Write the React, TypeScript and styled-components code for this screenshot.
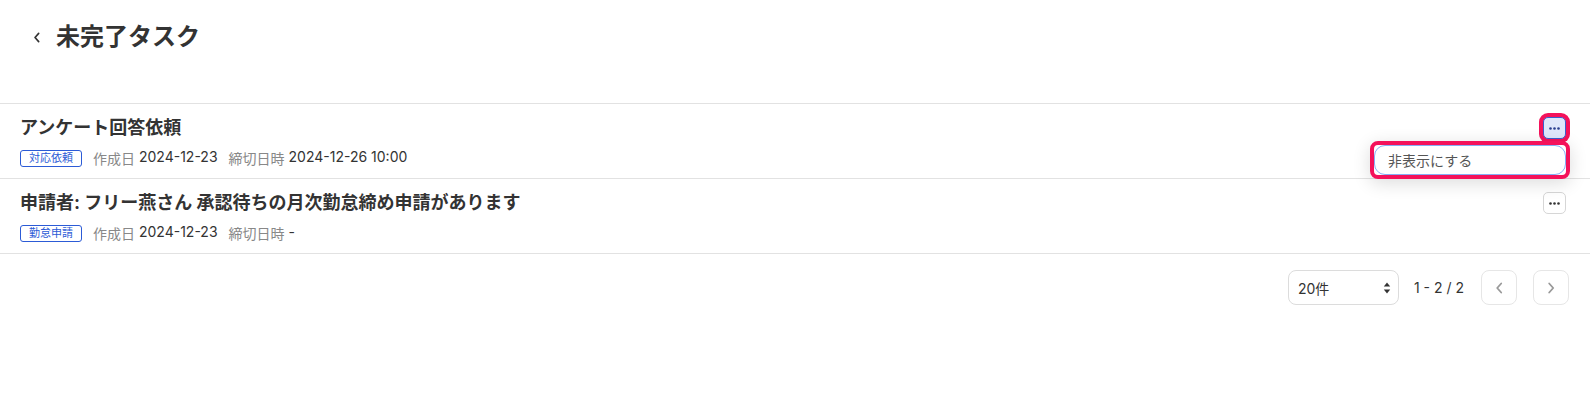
import React from 'react';
import styled, { createGlobalStyle } from 'styled-components';

const GlobalStyle = createGlobalStyle`
  html, body {
    margin: 0;
    padding: 0;
    background: #fff;
  }
  body {
    font-family: Inter, "Noto Sans CJK JP", sans-serif;
    color: #333;
  }
  * { box-sizing: border-box; }
`;

const HIGHLIGHT = '#f4125b';

const Page = styled.div`
  width: 1590px;
  height: 416px;
  background: #fff;
`;

const Header = styled.header`
  height: 103px;
  display: flex;
  align-items: flex-start;
  padding: 19px 20px 0 30px;
  gap: 12px;
`;

const BackButton = styled.button`
  width: 14px;
  height: 36px;
  padding: 0;
  border: none;
  background: none;
  display: flex;
  align-items: center;
  justify-content: center;
  color: #333;
`;

const PageTitle = styled.h1`
  margin: 0;
  font-size: 24px;
  line-height: 36px;
  font-weight: 700;
  color: #333;
`;

const List = styled.ul`
  list-style: none;
  margin: 0;
  padding: 0;
  border-top: 1px solid #e2e2e2;
`;

const Row = styled.li`
  display: flex;
  justify-content: space-between;
  align-items: flex-start;
  padding: 11px 24px 10px 20px;
  border-bottom: 1px solid #e2e2e2;
`;

const RowBody = styled.div`
  display: flex;
  flex-direction: column;
  gap: 7px;
`;

const RowTitle = styled.div`
  font-size: 18px;
  line-height: 26px;
  font-weight: 700;
  color: #333;
`;

const Meta = styled.div`
  display: flex;
  align-items: center;
  height: 20px;
  font-size: 14px;
  gap: 11px;
`;

const Tag = styled.span`
  display: inline-flex;
  align-items: center;
  height: 17px;
  padding: 0 8px;
  border: 1px solid #2c5bd6;
  border-radius: 3px;
  color: #2c5bd6;
  font-size: 11px;
  line-height: 1;
`;

const MetaItem = styled.span`
  display: inline-flex;
  gap: 4px;
  color: #333;
`;

const MetaLabel = styled.span`
  color: #888;
`;

const KebabWrap = styled.div`
  position: relative;
  margin-top: 2px;
`;

const Kebab = styled.button<{ $active?: boolean }>`
  width: 23px;
  height: 22px;
  padding: 0;
  display: flex;
  align-items: center;
  justify-content: center;
  border-radius: 5px;
  border: 1px solid ${p => (p.$active ? '#3b5fce' : '#d6d6d6')};
  background: ${p => (p.$active ? '#dfe7fb' : '#fff')};
  color: ${p => (p.$active ? '#2a3f8f' : '#333')};
  box-shadow: ${p => (p.$active ? `0 0 0 4px ${HIGHLIGHT}` : 'none')};
`;

const Menu = styled.div`
  position: absolute;
  top: calc(100% + 2px);
  right: -4px;
  width: 200px;
  border: 4px solid ${HIGHLIGHT};
  border-radius: 8px;
  background: #fff;
  box-shadow: 0 4px 18px rgba(0, 0, 0, 0.14);
  z-index: 2;
`;

const MenuItem = styled.div`
  height: 30px;
  display: flex;
  align-items: center;
  padding-left: 13px;
  border: 1.5px solid #86aef5;
  border-radius: 11px;
  font-size: 14px;
  color: #555;
`;

const Pager = styled.div`
  display: flex;
  justify-content: flex-end;
  align-items: center;
  padding: 16px 21px 0 0;
  gap: 16px;
`;

const PerPage = styled.div`
  width: 111px;
  height: 35px;
  display: flex;
  align-items: center;
  justify-content: space-between;
  padding: 0 7px 0 9px;
  border: 1px solid #dcdcdc;
  border-radius: 8px;
  font-size: 14px;
  color: #333;
  margin-right: -1px;
`;

const Range = styled.span`
  font-size: 14px;
  color: #333;
  margin-right: 1px;
`;

const PageButton = styled.button`
  width: 36px;
  height: 35px;
  padding: 0;
  display: flex;
  align-items: center;
  justify-content: center;
  border: 1px solid #e6e6e6;
  border-radius: 8px;
  background: #fff;
  color: #999;
`;

const Dots = () => (
  <svg width="11" height="3" viewBox="0 0 11 3">
    <circle cx="1.5" cy="1.5" r="1.3" fill="currentColor" />
    <circle cx="5.5" cy="1.5" r="1.3" fill="currentColor" />
    <circle cx="9.5" cy="1.5" r="1.3" fill="currentColor" />
  </svg>
);

const Chevron = ({ dir, size = 12 }: { dir: 'left' | 'right'; size?: number }) => (
  <svg width={size * 0.7} height={size} viewBox="0 0 7 12" fill="none">
    <path
      d={dir === 'left' ? 'M5.5 1.5L1.5 6l4 4.5' : 'M1.5 1.5l4 4.5-4 4.5'}
      stroke="currentColor"
      strokeWidth="1.8"
      strokeLinecap="round"
      strokeLinejoin="round"
    />
  </svg>
);

const tasks = [
  {
    title: 'アンケート回答依頼',
    tag: '対応依頼',
    created: '2024-12-23',
    due: '2024-12-26 10:00',
    open: true,
  },
  {
    title: '申請者: フリー燕さん 承認待ちの月次勤怠締め申請があります',
    tag: '勤怠申請',
    created: '2024-12-23',
    due: '-',
    open: false,
  },
];

const App = () => {
  return (
    <Page>
      <GlobalStyle />
      <Header>
        <BackButton aria-label="戻る">
          <Chevron dir="left" size={11} />
        </BackButton>
        <PageTitle>未完了タスク</PageTitle>
      </Header>
      <List>
        {tasks.map(t => (
          <Row key={t.title}>
            <RowBody>
              <RowTitle>{t.title}</RowTitle>
              <Meta>
                <Tag>{t.tag}</Tag>
                <MetaItem>
                  <MetaLabel>作成日</MetaLabel>
                  {t.created}
                </MetaItem>
                <MetaItem>
                  <MetaLabel>締切日時</MetaLabel>
                  {t.due}
                </MetaItem>
              </Meta>
            </RowBody>
            <KebabWrap>
              <Kebab $active={t.open} aria-label="メニュー">
                <Dots />
              </Kebab>
              {t.open && (
                <Menu>
                  <MenuItem>非表示にする</MenuItem>
                </Menu>
              )}
            </KebabWrap>
          </Row>
        ))}
      </List>
      <Pager>
        <PerPage>
          <span>20件</span>
          <svg width="8" height="12" viewBox="0 0 8 12">
            <path d="M4 0.5L7.2 4.6H0.8z" fill="#333" />
            <path d="M4 11.5L0.8 7.4h6.4z" fill="#333" />
          </svg>
        </PerPage>
        <Range>1 - 2 / 2</Range>
        <PageButton aria-label="前へ">
          <Chevron dir="left" />
        </PageButton>
        <PageButton aria-label="次へ">
          <Chevron dir="right" />
        </PageButton>
      </Pager>
    </Page>
  );
};

export default App;
